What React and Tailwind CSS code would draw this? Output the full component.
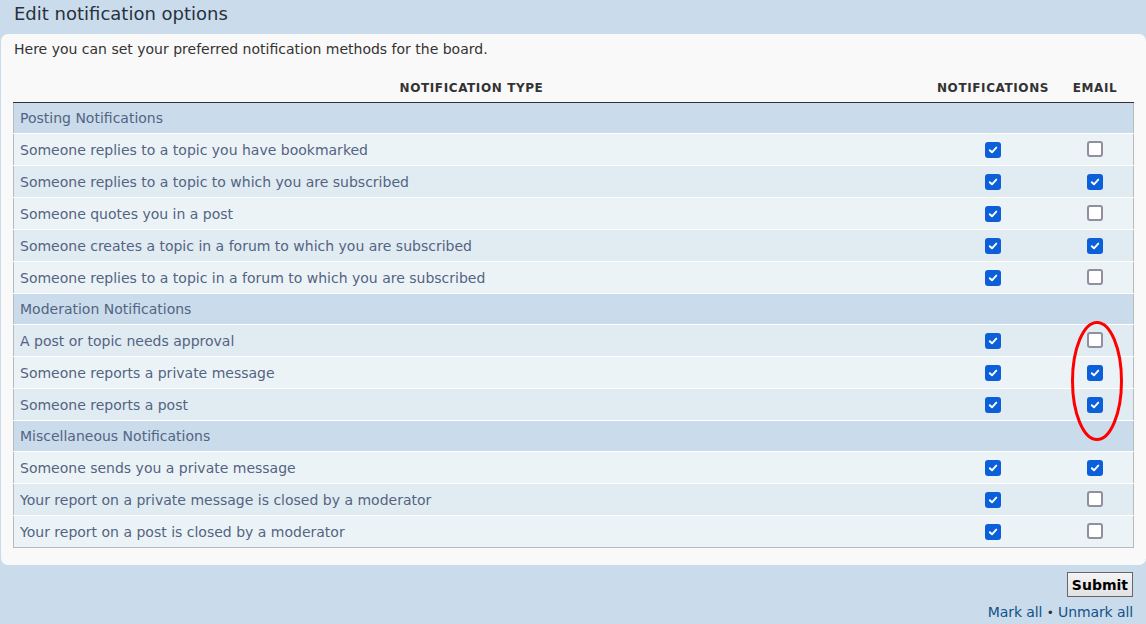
import React from 'react';

const groups = [
  {
    title: 'Posting Notifications',
    rows: [
      ['Someone replies to a topic you have bookmarked', true, false],
      ['Someone replies to a topic to which you are subscribed', true, true],
      ['Someone quotes you in a post', true, false],
      ['Someone creates a topic in a forum to which you are subscribed', true, true],
      ['Someone replies to a topic in a forum to which you are subscribed', true, false],
    ],
  },
  {
    title: 'Moderation Notifications',
    rows: [
      ['A post or topic needs approval', true, false],
      ['Someone reports a private message', true, true],
      ['Someone reports a post', true, true],
    ],
  },
  {
    title: 'Miscellaneous Notifications',
    rows: [
      ['Someone sends you a private message', true, true],
      ['Your report on a private message is closed by a moderator', true, false],
      ['Your report on a post is closed by a moderator', true, false],
    ],
  },
];

const Box = ({ checked }) =>
  checked ? (
    <span className="inline-flex w-4 h-4 rounded-[3px] bg-[#0b5fd9] items-center justify-center">
      <svg width="10" height="10" viewBox="0 0 10 10">
        <path d="M1.8 5.2 L4 7.3 L8.3 2.6" fill="none" stroke="white" strokeWidth="1.9" strokeLinecap="round" strokeLinejoin="round" />
      </svg>
    </span>
  ) : (
    <span className="inline-block w-4 h-4 rounded-[3px] bg-white border-2 border-[#8f8f9d]" />
  );

const App = () => {
  let idx = 0;
  return (
    <div className="w-[1146px] h-[624px] bg-[#cadceb] relative overflow-hidden" style={{ fontFamily: '"DejaVu Sans", Verdana, sans-serif' }}>
      <h2 className="text-[18px] text-[#28313f] pl-[14px] pt-[3px] h-[34px] leading-[22px]">Edit notification options</h2>

      <div className="ml-[1px] bg-[#f9f9f9] rounded-[7px] pt-[6px] pb-[17px] px-[12px]">
        <p className="text-[14px] text-[#333] pl-[1px] leading-[18px]">Here you can set your preferred notification methods for the board.</p>

        <table className="w-full mt-[20px] border-collapse text-[14px]">
          <thead>
            <tr className="text-[12px] font-bold text-[#333] uppercase tracking-[0.6px] leading-[16px]">
              <th className="text-center font-bold border-b border-[#333] pt-[2px] pb-[6px]">Notification type</th>
              <th className="w-[127px] text-center font-bold border-b border-[#333] pt-[2px] pb-[6px]">Notifications</th>
              <th className="w-[77px] text-center font-bold border-b border-[#333] pt-[2px] pb-[6px]">Email</th>
            </tr>
          </thead>
          <tbody className="border-l border-r border-b border-[#b4bac0]">
            {groups.map((g) => (
              <React.Fragment key={g.title}>
                <tr className="bg-[#cadceb] border-t border-white">
                  <td colSpan={3} className="h-[31px] pl-[6px] pt-[1px] text-[#536482]">{g.title}</td>
                </tr>
                {g.rows.map(([label, n, e]) => {
                  idx += 1;
                  const bg = idx % 2 === 1 ? 'bg-[#ecf3f7]' : 'bg-[#e1ebf2]';
                  return (
                    <tr key={label} className={`border-t border-white ${bg}`}>
                      <td className="h-[32px] pl-[6px] pt-[1px] text-[#536482]">{label}</td>
                      <td className="text-center align-middle"><span className="inline-flex mt-[4px]"><Box checked={n} /></span></td>
                      <td className="text-center align-middle"><span className="inline-flex mt-[4px]"><Box checked={e} /></span></td>
                    </tr>
                  );
                })}
              </React.Fragment>
            ))}
          </tbody>
        </table>
      </div>

      <div className="flex flex-col items-end pr-[13px] pt-[7px]">
        <button className="h-[25px] px-[4px] border border-[#666] bg-gradient-to-b from-[#f4f4f4] to-[#e2e2e2] text-[14px] font-bold text-black leading-none">Submit</button>
        <div className="mt-[5px] text-[14px] text-[#105289] tracking-[-0.1px]">
          Mark all <span className="text-[#333] text-[12px]">•</span> Unmark all
        </div>
      </div>

      <svg className="absolute left-[1068px] top-[320px]" width="58" height="122" viewBox="0 0 58 122">
        <ellipse cx="29" cy="61" rx="24.5" ry="58.5" fill="none" stroke="#ff0000" strokeWidth="3" />
      </svg>
    </div>
  );
};

export default App;
